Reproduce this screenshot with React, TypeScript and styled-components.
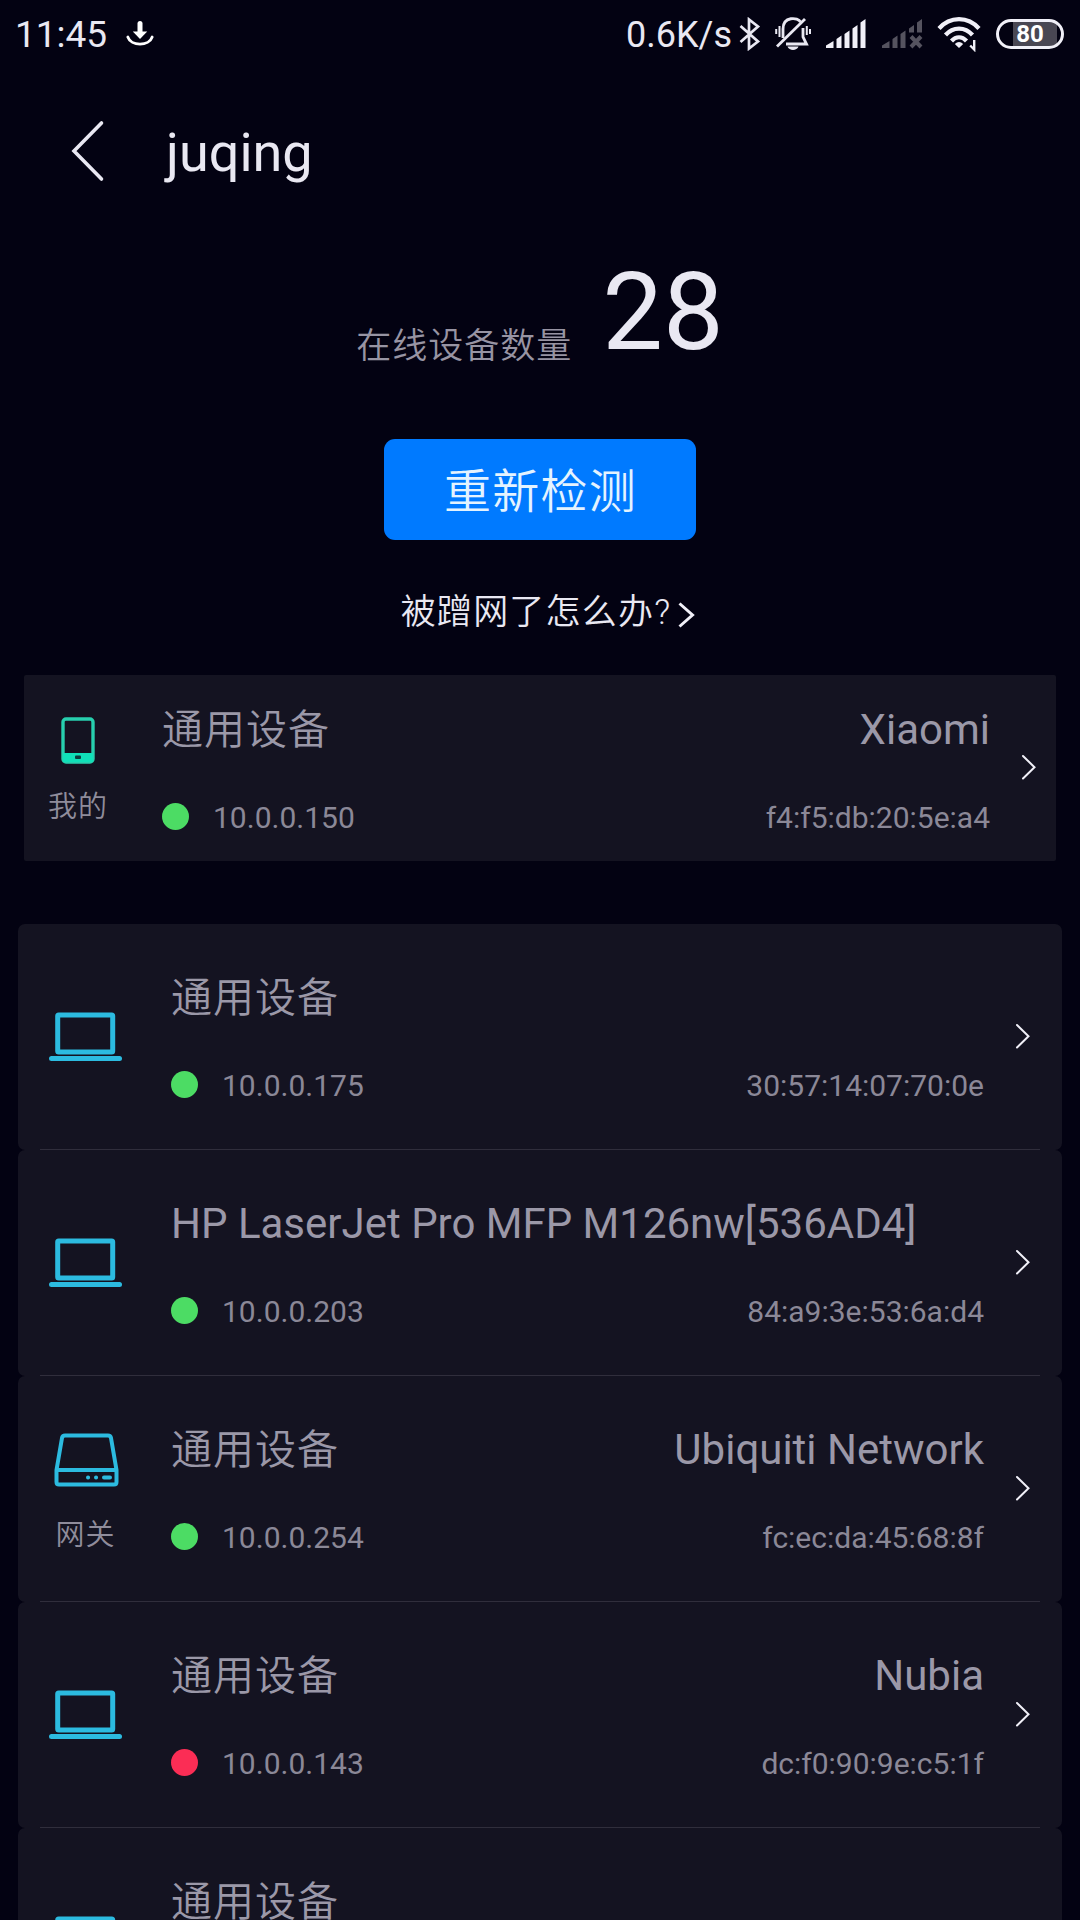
import React from "react";
import styled, { createGlobalStyle } from "styled-components";

const Global = createGlobalStyle`
  * { box-sizing: border-box; }
  html, body { margin: 0; background: #030212; }
  body { width: 1080px; height: 1920px; overflow: hidden; }
`;

const Screen = styled.div`
  display: flex;
  flex-direction: column;
  width: 1080px;
  height: 1920px;
  overflow: hidden;
  background: #030212;
  color: #e9e8f2;
  font-family: Roboto, "Noto Sans CJK SC", sans-serif;
`;

const StatusBar = styled.div`
  flex: none;
  display: flex;
  align-items: center;
  justify-content: space-between;
  height: 70px;
  padding: 0 16px 0 15px;
`;

const StatusGroup = styled.div`
  display: flex;
  align-items: center;
`;

const StatusText = styled.span<{ $size: number; $gap: number }>`
  font-size: ${(p) => p.$size}px;
  line-height: 70px;
  margin-right: ${(p) => p.$gap}px;
`;

const Header = styled.header`
  flex: none;
  display: flex;
  align-items: center;
  height: 166px;
  padding: 0 72px 0 70px;
`;

const Title = styled.h1`
  margin: -1px 0 0 60px;
  font-size: 54px;
  font-weight: 400;
  line-height: 64px;
`;

const Summary = styled.section`
  flex: none;
  display: flex;
  flex-direction: column;
  align-items: center;
  height: 439px;
`;

const CountRow = styled.div`
  display: flex;
  align-items: flex-start;
  height: 203px;
`;

const CountLabel = styled.span`
  margin-top: 86px;
  font-size: 35px;
  font-weight: 350;
  letter-spacing: 1px;
  line-height: 50px;
  color: #9794a3;
`;

const CountValue = styled.span`
  margin: 11px 0 0 30px;
  font-size: 108px;
  line-height: 130px;
`;

const ScanButton = styled.button`
  width: 312px;
  height: 101px;
  padding: 4px 0 0 1px;
  border: 0;
  border-radius: 11px;
  background: #007aff;
  color: #e4f3ff;
  font-family: inherit;
  font-size: 47px;
  font-weight: 350;
  letter-spacing: 1.2px;
  line-height: 97px;
`;

const HelpLink = styled.a`
  display: flex;
  align-items: center;
  height: 50px;
  margin: 48px 0 0 16px;
  font-size: 35px;
  font-weight: 350;
  letter-spacing: 1.2px;
  line-height: 50px;
  svg { margin: 3px 0 0 6px; }
`;

const Card = styled.div`
  flex: none;
  display: flex;
  width: 1032px;
  height: 186px;
  margin: 0 0 63px 24px;
  padding: 0 19px 0 0;
  background: #141321;
  border-radius: 2px;
`;

const List = styled.div`
  flex: none;
  width: 1044px;
  margin-left: 18px;
`;

const ListItem = styled.div`
  display: flex;
  flex-direction: column;
  height: 226px;
  background: #141321;
  border-radius: 7px;
`;

const ItemContent = styled.div`
  flex: 1;
  display: flex;
  padding-right: 31px;
`;

const Divider = styled.div`
  height: 1px;
  margin: 0 22px;
  background: #302e3c;
`;

const IconColumn = styled.div<{ $width: number; $center: number; $top: number }>`
  display: flex;
  flex-direction: column;
  align-items: center;
  width: ${(p) => p.$center * 2}px;
  margin-right: ${(p) => p.$width - p.$center * 2}px;
  padding-top: ${(p) => p.$top}px;
  svg { display: block; flex: none; }
`;

const RoleLabel = styled.span<{ $gap: number }>`
  margin-top: ${(p) => p.$gap}px;
  font-size: 29px;
  font-weight: 350;
  letter-spacing: 1px;
  line-height: 40px;
  color: #8f8c9b;
  white-space: nowrap;
`;

const Details = styled.div<{ $top: number }>`
  flex: 1;
  display: flex;
  flex-direction: column;
  gap: 42px;
  padding-top: ${(p) => p.$top}px;
`;

const Line = styled.div`
  display: flex;
  align-items: center;
  justify-content: space-between;
`;

const Name = styled.span`
  height: 50px;
  font-size: 42px;
  font-weight: 400;
  line-height: 50px;
  color: #9b98a8;
  white-space: nowrap;
`;

const GenericName = styled(Name)`
  font-size: 41px;
  font-weight: 350;
  letter-spacing: 1px;
`;

const Address = styled.span`
  display: flex;
  align-items: center;
  height: 42px;
  font-size: 30px;
  line-height: 42px;
  color: #8b8897;
`;

const StatusDot = styled.i<{ $online: boolean }>`
  width: 27px;
  height: 27px;
  margin: 0 24px 3px 0;
  border-radius: 50%;
  background: ${(p) => (p.$online ? "#4cdc64" : "#fb2d55")};
`;

const ArrowCell = styled.div`
  display: flex;
  align-items: center;
  margin-left: 31px;
  padding-bottom: 2px;
`;

const DownloadIcon = () => (
  <svg width="28" height="26" viewBox="0 0 28 26" fill="none" stroke="#fff">
    <path d="M14 2.5V12" strokeWidth="5" strokeLinecap="round" />
    <path d="M6.8 10.5H21.2L14 18Z" fill="#fff" stroke="none" />
    <path d="M1.8 16C5 25.5 23 25.5 26.2 16" strokeWidth="2.8" strokeLinecap="round" />
  </svg>
);

const BluetoothIcon = () => (
  <svg width="22" height="34" viewBox="0 0 22 34" fill="none" stroke="#e9e8f2" strokeWidth="2.7">
    <path d="M1.5 9L19 24.5L10 31.5V2.5L19 9.5L1.5 25" />
  </svg>
);

const MutedBellIcon = () => (
  <svg width="36" height="34" viewBox="0 0 36 34" fill="none" stroke="#e9e8f2" strokeWidth="2.8">
    <path d="M8 21V12C8 -1 23 0 25.5 5" />
    <path d="M28 11V20L31.5 27H11" />
    <path d="M2 29.5L30 2" />
    <path d="M12.5 29.5H23.5C22 34 14 34 12.5 29.5Z" fill="#e9e8f2" stroke="none" />
    <path d="M4.5 9V20M1.2 12V17M31.8 9V18M35 12V17" strokeWidth="2" />
  </svg>
);

const SignalIcon = () => (
  <svg width="42" height="32" viewBox="0 0 42 32" fill="#f1f0f8">
    <path d="M1 30V27.5L8.5 23V30ZM11.5 30V21L16.5 17.5V30ZM19.5 30V16L24.5 12.5V30ZM27.5 30V10.5L32.5 7V30ZM35.5 30V4.5L40.5 1V30Z" />
  </svg>
);

const NoSignalIcon = () => (
  <svg width="42" height="32" viewBox="0 0 42 32" fill="#55535f">
    <path d="M1 30V27.5L8.5 23V30ZM11.5 30V21L16.5 17.5V30ZM19.5 30V16L24.5 12.5V30ZM28 14.5V10.5L33 7V14.5ZM36 14.5V4.5L41 1V14.5Z" />
    <path d="M30 18.5L40 29M40 18.5L30 29" stroke="#55535f" strokeWidth="4" />
  </svg>
);

const WifiIcon = () => (
  <svg width="44" height="36" viewBox="0 0 44 36" fill="none" stroke="#f1f0f8" strokeWidth="4.2">
    <path d="M2 12.5C13 0 31 0 42 12.5" />
    <path d="M8.5 19C16 10.5 28 10.5 35.5 19" />
    <path d="M14.5 25C19 20 25 20 29.5 25" />
    <path d="M17.8 28Q22 24 26.2 28L22 32Z" fill="#f1f0f8" stroke="none" />
    <path d="M37.2 24V33.5L33.2 29.5" strokeWidth="2.4" />
  </svg>
);

const Battery = styled.div`
  display: flex;
  align-items: center;
  justify-content: center;
  width: 68px;
  height: 30px;
  margin-bottom: 3px;
  border: 3px solid #f1f0f8;
  border-radius: 15px;
  background: linear-gradient(90deg, transparent 0 14px, #494753 14px 58px, transparent 58px);
  font-size: 24px;
  font-weight: 700;
  line-height: 26px;
  color: #fff;
`;

const IconSlot = styled.span<{ $gap: number }>`
  display: flex;
  margin-bottom: 2px;
  margin-right: ${(p) => p.$gap}px;
`;

const BackIcon = () => (
  <svg width="36" height="66" viewBox="0 0 36 66" fill="none" stroke="#e9e8f2" strokeWidth="3.6" strokeLinecap="round">
    <path d="M31.5 3L4 31L31.5 59" />
  </svg>
);

const HelpArrow = () => (
  <svg width="18" height="28" viewBox="0 0 18 28" fill="none" stroke="#f1f0f8" strokeWidth="3">
    <path d="M2.5 2.5L15.5 14L2.5 25.5" />
  </svg>
);

const ArrowIcon = () => (
  <svg width="16" height="28" viewBox="0 0 16 28" fill="none" stroke="#f1f0f8" strokeWidth="2" strokeLinecap="round">
    <path d="M2 3L13.5 14.2L2 25.5" />
  </svg>
);

const PhoneIcon = () => (
  <svg width="34" height="47" viewBox="0 0 34 47">
    <rect x="2" y="2" width="30" height="43" rx="3" fill="none" stroke="#27cfae" strokeWidth="3.4" />
    <path d="M2 36H32V45H2Z" fill="#10e0b8" />
    <rect x="14" y="38.5" width="6" height="3.5" rx="1" fill="#0b3d3e" />
  </svg>
);

const LaptopIcon = () => (
  <svg width="74" height="50" viewBox="0 0 74 50" fill="none" stroke="#2cbbe0">
    <rect x="8.7" y="3" width="55" height="37" rx="1" strokeWidth="5" />
    <path d="M2.5 46.6H70.5" strokeWidth="5" strokeLinecap="round" />
  </svg>
);

const RouterIcon = () => (
  <svg width="66" height="54" viewBox="-1 0 66 54" fill="none" stroke="#2cbbe0" strokeWidth="4" strokeLinejoin="round">
    <path d="M2.5 37L8 5Q8.5 2.5 11 2.5H54Q56.5 2.5 57 5L62.5 37V49Q62.5 51.5 60 51.5H5Q2.5 51.5 2.5 49Z" />
    <path d="M2.5 37H62.5" />
    <path d="M34 44.5H34.1M42 44.5H42.1M50 44.5H56" strokeLinecap="round" />
  </svg>
);

const icons = { phone: PhoneIcon, laptop: LaptopIcon, router: RouterIcon };

type Device = {
  icon: keyof typeof icons;
  role?: string;
  name?: string;
  vendor?: string;
  ip: string;
  mac: string;
  online: boolean;
};

const mine: Device = { icon: "phone", role: "我的", vendor: "Xiaomi", ip: "10.0.0.150", mac: "f4:f5:db:20:5e:a4", online: true };

const devices: Device[] = [
  { icon: "laptop", ip: "10.0.0.175", mac: "30:57:14:07:70:0e", online: true },
  { icon: "laptop", name: "HP LaserJet Pro MFP M126nw[536AD4]", ip: "10.0.0.203", mac: "84:a9:3e:53:6a:d4", online: true },
  { icon: "router", role: "网关", vendor: "Ubiquiti Network", ip: "10.0.0.254", mac: "fc:ec:da:45:68:8f", online: true },
  { icon: "laptop", vendor: "Nubia", ip: "10.0.0.143", mac: "dc:f0:90:9e:c5:1f", online: false },
  { icon: "laptop", ip: "", mac: "", online: true },
];

const iconTop = { phone: 42, laptop: 88, router: 57 };

function DeviceRow({ device, compact }: { device: Device; compact?: boolean }) {
  const Icon = icons[device.icon];
  return (
    <>
      <IconColumn $width={compact ? 138 : 153} $center={compact ? 54 : 67.5} $top={iconTop[device.icon]}>
        <Icon />
        {device.role && <RoleLabel $gap={compact ? 23 : 28}>{device.role}</RoleLabel>}
      </IconColumn>
      <Details $top={compact ? 30 : 49}>
        <Line>
          {device.name ? <Name>{device.name}</Name> : <GenericName>通用设备</GenericName>}
          {device.vendor && <Name>{device.vendor}</Name>}
        </Line>
        {device.ip && (
          <Line>
            <Address>
              <StatusDot $online={device.online} />
              {device.ip}
            </Address>
            <Address>{device.mac}</Address>
          </Line>
        )}
      </Details>
      <ArrowCell>
        <ArrowIcon />
      </ArrowCell>
    </>
  );
}

export default function App() {
  return (
    <Screen>
      <Global />
      <StatusBar>
        <StatusGroup>
          <StatusText $size={37} $gap={19}>11:45</StatusText>
          <IconSlot $gap={0}><DownloadIcon /></IconSlot>
        </StatusGroup>
        <StatusGroup>
          <StatusText $size={36} $gap={7}>0.6K/s</StatusText>
          <IconSlot $gap={14}><BluetoothIcon /></IconSlot>
          <IconSlot $gap={14}><MutedBellIcon /></IconSlot>
          <IconSlot $gap={14}><SignalIcon /></IconSlot>
          <IconSlot $gap={14}><NoSignalIcon /></IconSlot>
          <IconSlot $gap={15}><WifiIcon /></IconSlot>
          <Battery>80</Battery>
        </StatusGroup>
      </StatusBar>
      <Header>
        <BackIcon />
        <Title>juqing</Title>
      </Header>
      <Summary>
        <CountRow>
          <CountLabel>在线设备数量</CountLabel>
          <CountValue>28</CountValue>
        </CountRow>
        <ScanButton>重新检测</ScanButton>
        <HelpLink>
          被蹭网了怎么办?
          <HelpArrow />
        </HelpLink>
      </Summary>
      <Card>
        <DeviceRow device={mine} compact />
      </Card>
      <List>
        {devices.map((device, i) => (
          <ListItem key={i}>
            <ItemContent>
              <DeviceRow device={device} />
            </ItemContent>
            <Divider />
          </ListItem>
        ))}
      </List>
    </Screen>
  );
}
